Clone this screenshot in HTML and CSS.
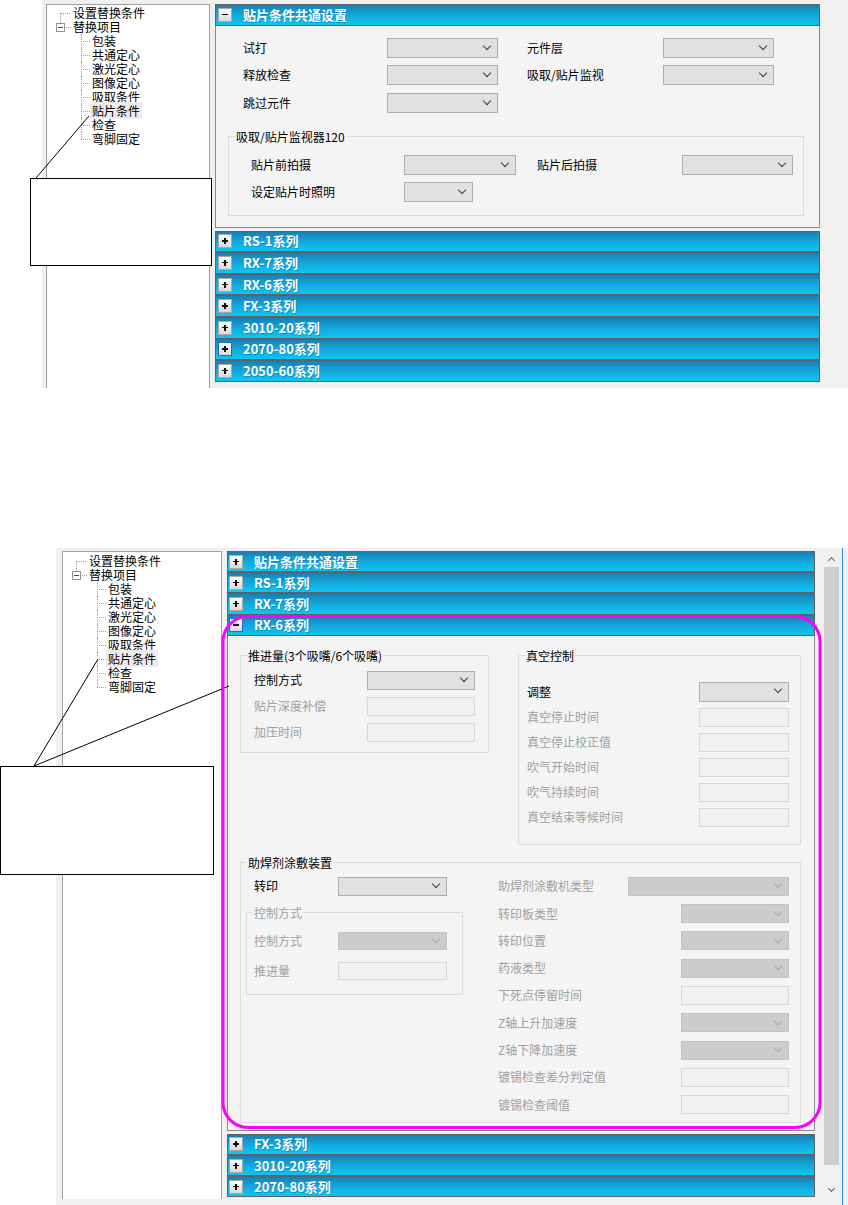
FILE: index.html
```html
<!DOCTYPE html>
<html lang="zh-CN">
<head>
    <meta charset="UTF-8">
    <title>替换条件设置</title>
    <link rel="stylesheet" href="styles.css">
</head>
<body>
<div class="page">

    <!-- first capture: common placement settings open -->
    <div class="shot shot-top">
        <ul class="tree">
            <li class="node root first">设置替换条件</li>
            <li class="node root branch"><span class="toggle"></span>替换项目</li>
            <li class="node child">包装</li>
            <li class="node child">共通定心</li>
            <li class="node child">激光定心</li>
            <li class="node child">图像定心</li>
            <li class="node child">吸取条件</li>
            <li class="node child"><span class="sel">贴片条件</span></li>
            <li class="node child">检查</li>
            <li class="node child last">弯脚固定</li>
        </ul>

        <div class="accordion">
            <div class="bar"><span class="pm"></span><span class="bar-title">贴片条件共通设置</span></div>
            <div class="pane pane-common">
                <div class="grid-common">
                    <span class="lbl">试打</span><span class="combo"></span>
                    <span class="lbl lbl-r">元件层</span><span class="combo"></span>
                    <span class="lbl">释放检查</span><span class="combo"></span>
                    <span class="lbl lbl-r">吸取/贴片监视</span><span class="combo"></span>
                    <span class="lbl">跳过元件</span><span class="combo"></span>
                </div>
                <fieldset class="group group-monitor">
                    <legend>吸取/贴片监视器120</legend>
                    <div class="grid-monitor">
                        <span class="lbl">贴片前拍摄</span><span class="combo"></span>
                        <span class="lbl lbl-m">贴片后拍摄</span><span class="combo"></span>
                        <span class="lbl">设定贴片时照明</span><span class="combo combo-short"></span>
                    </div>
                </fieldset>
            </div>
            <div class="bar"><span class="pm plus"></span><span class="bar-title">RS-1系列</span></div>
            <div class="bar"><span class="pm plus"></span><span class="bar-title">RX-7系列</span></div>
            <div class="bar"><span class="pm plus"></span><span class="bar-title">RX-6系列</span></div>
            <div class="bar"><span class="pm plus"></span><span class="bar-title">FX-3系列</span></div>
            <div class="bar"><span class="pm plus"></span><span class="bar-title">3010-20系列</span></div>
            <div class="bar"><span class="pm plus focus"></span><span class="bar-title">2070-80系列</span></div>
            <div class="bar"><span class="pm plus"></span><span class="bar-title">2050-60系列</span></div>
        </div>
    </div>

    <!-- second capture: RX-6 series open -->
    <div class="shot shot-bottom">
        <ul class="tree">
            <li class="node root first">设置替换条件</li>
            <li class="node root branch"><span class="toggle"></span>替换项目</li>
            <li class="node child">包装</li>
            <li class="node child">共通定心</li>
            <li class="node child">激光定心</li>
            <li class="node child">图像定心</li>
            <li class="node child">吸取条件</li>
            <li class="node child"><span class="sel">贴片条件</span></li>
            <li class="node child">检查</li>
            <li class="node child last">弯脚固定</li>
        </ul>

        <div class="accordion">
            <div class="bar"><span class="pm plus"></span><span class="bar-title">贴片条件共通设置</span></div>
            <div class="bar"><span class="pm plus"></span><span class="bar-title">RS-1系列</span></div>
            <div class="bar"><span class="pm plus"></span><span class="bar-title">RX-7系列</span></div>
            <div class="bar"><span class="pm focus"></span><span class="bar-title">RX-6系列</span></div>
            <div class="pane pane-rx6">
                <div class="rx6-top">
                    <fieldset class="group group-feed">
                        <legend>推进量(3个吸嘴/6个吸嘴)</legend>
                        <div class="grid-feed">
                            <span class="lbl">控制方式</span><span class="combo"></span>
                            <span class="lbl off">贴片深度补偿</span><span class="field"></span>
                            <span class="lbl off">加压时间</span><span class="field"></span>
                        </div>
                    </fieldset>
                    <fieldset class="group group-vac">
                        <legend>真空控制</legend>
                        <div class="grid-vac">
                            <span class="lbl">调整</span><span class="combo"></span>
                            <span class="lbl off">真空停止时间</span><span class="field"></span>
                            <span class="lbl off">真空停止校正值</span><span class="field"></span>
                            <span class="lbl off">吹气开始时间</span><span class="field"></span>
                            <span class="lbl off">吹气持续时间</span><span class="field"></span>
                            <span class="lbl off">真空结束等候时间</span><span class="field"></span>
                        </div>
                    </fieldset>
                </div>

                <fieldset class="group group-flux">
                    <legend>助焊剂涂敷装置</legend>
                    <div class="flux-cols">
                        <div class="flux-left">
                            <div class="flux-row">
                                <span class="lbl">转印</span><span class="combo"></span>
                            </div>
                            <fieldset class="group group-ctrl">
                                <legend class="off">控制方式</legend>
                                <div class="grid-ctrl">
                                    <span class="lbl off">控制方式</span><span class="combo off"></span>
                                    <span class="lbl off">推进量</span><span class="field"></span>
                                </div>
                            </fieldset>
                        </div>
                        <div class="flux-right">
                            <div class="frow"><span class="lbl off">助焊剂涂敷机类型</span><span class="combo off w-wide"></span></div>
                            <div class="frow"><span class="lbl off">转印板类型</span><span class="combo off w-std"></span></div>
                            <div class="frow"><span class="lbl off">转印位置</span><span class="combo off w-std"></span></div>
                            <div class="frow"><span class="lbl off">药液类型</span><span class="combo off w-std"></span></div>
                            <div class="frow"><span class="lbl off">下死点停留时间</span><span class="field w-std"></span></div>
                            <div class="frow"><span class="lbl off">Z轴上升加速度</span><span class="combo off w-std"></span></div>
                            <div class="frow"><span class="lbl off">Z轴下降加速度</span><span class="combo off w-std"></span></div>
                            <div class="frow"><span class="lbl off">镀锡检查差分判定值</span><span class="field w-std"></span></div>
                            <div class="frow"><span class="lbl off">镀锡检查阈值</span><span class="field w-std"></span></div>
                        </div>
                    </div>
                </fieldset>
            </div>
            <div class="bar"><span class="pm plus"></span><span class="bar-title">FX-3系列</span></div>
            <div class="bar"><span class="pm plus"></span><span class="bar-title">3010-20系列</span></div>
            <div class="bar"><span class="pm plus"></span><span class="bar-title">2070-80系列</span></div>
        </div>

        <div class="scrollbar">
            <span class="sb-arrow up"></span>
            <span class="sb-thumb"></span>
            <span class="sb-arrow down"></span>
        </div>
        <div class="focus-edge"></div>
    </div>

    <!-- callouts drawn over both captures -->
    <svg class="marks" width="848" height="1205" viewBox="0 0 848 1205">
        <line x1="36" y1="178" x2="89" y2="116"/>
        <rect x="30.5" y="178.5" width="181" height="87"/>
        <line x1="34" y1="766" x2="98" y2="659"/>
        <line x1="34" y1="766" x2="229" y2="686"/>
        <rect x="0.5" y="766.5" width="213" height="108"/>
        <rect class="ring" x="223" y="616.5" width="597" height="511" rx="25" ry="25"/>
    </svg>
</div>
</body>
</html>
```

FILE: styles.css
```css
body {
    margin: 0;
    background-color: #ffffff;
    font-family: "Noto Sans CJK SC", "Noto Sans", sans-serif;
    font-size: 12px;
    line-height: 16px;
    color: #000;
}

.page {
    position: relative;
    width: 848px;
    height: 1205px;
    overflow: hidden;
}

/* window captures */
.shot {
    display: flex;
    align-items: flex-start;
    box-sizing: border-box;
    background-color: #f0f0f0;
    overflow: hidden;
}

.shot-top {
    margin-left: 42px;
    width: 806px;
    height: 388px;
    padding: 4px 0 0 4px;
}

.shot-bottom {
    margin: 160px 0 0 56px;
    width: 792px;
    height: 657px;
    padding: 3px 0 0 6px;
}

/* tree view */
.tree {
    flex: none;
    list-style: none;
    margin: 0 5px 0 0;
    box-sizing: border-box;
    background-color: #ffffff;
    border: 1px solid #a0a0a0;
    border-bottom: 0;
}

.shot-top .tree {
    width: 164px;
    height: 384px;
    padding: 1px 0 0 0;
}

.shot-bottom .tree {
    width: 160px;
    height: 648px;
    padding: 2px 0 0 0;
}

.node {
    position: relative;
    height: 14px;
    line-height: 14px;
    white-space: nowrap;
}

.node::before, .node::after {
    content: "";
    position: absolute;
}

.root {
    padding-left: 26px;
}

.child {
    padding-left: 45px;
}

.first::before {
    left: 13px;
    top: 7px;
    width: 10px;
    border-top: 1px dotted #a0a0a0;
}

.first::after {
    left: 13px;
    top: 7px;
    height: 10px;
    border-left: 1px dotted #a0a0a0;
}

.branch::before {
    left: 19px;
    top: 7px;
    width: 5px;
    border-top: 1px dotted #a0a0a0;
}

.child::before {
    left: 34px;
    top: 7px;
    width: 9px;
    border-top: 1px dotted #a0a0a0;
}

.child::after {
    left: 34px;
    top: 0;
    height: 14px;
    border-left: 1px dotted #a0a0a0;
}

.child.last::after {
    height: 7px;
}

.toggle {
    position: absolute;
    left: 9px;
    top: 3px;
    width: 9px;
    height: 9px;
    box-sizing: border-box;
    border: 1px solid #919191;
    background-color: #fff;
}

.toggle::after {
    content: "";
    position: absolute;
    left: 1px;
    top: 3px;
    width: 5px;
    height: 1px;
    background-color: #2f4f80;
}

.sel {
    background-color: #ececec;
    padding: 0 2px;
    margin-left: -2px;
}

/* accordion */
.accordion {
    flex: none;
    display: flex;
    flex-direction: column;
}

.shot-top .accordion {
    width: 605px;
}

.shot-bottom .accordion {
    width: 588px;
}

.bar {
    flex: none;
    display: flex;
    align-items: center;
    box-sizing: border-box;
    height: 21.6px;
    padding-left: 2px;
    border: 1px solid #5c6266;
    background: linear-gradient(#1780b5, #13a8db 50%, #0fc6f1);
    color: #fff;
    font-weight: 700;
    font-size: 13px;
}

.shot-bottom .bar {
    height: 21.2px;
    padding-left: 1px;
}

.bar-title {
    text-shadow: 1px 1px 0 rgba(0, 70, 110, 0.35);
}

.pm {
    position: relative;
    flex: none;
    width: 14px;
    height: 14px;
    box-sizing: border-box;
    margin-right: 11px;
    border: 1px solid #a8a8a8;
    background: linear-gradient(#ffffff, #d8d8d8);
}

.pm.focus {
    border-color: #1c6fd2;
}

.pm::before {
    content: "";
    position: absolute;
    left: 3px;
    top: 5px;
    width: 6px;
    height: 1.5px;
    background-color: #111;
}

.pm.plus::after {
    content: "";
    position: absolute;
    left: 5.25px;
    top: 3px;
    width: 1.5px;
    height: 6px;
    background-color: #111;
}

.pane {
    flex: none;
    box-sizing: border-box;
    background-color: #f4f4f4;
    border: 1px solid #8a8a8a;
    border-top: 0;
}

/* controls */
.lbl {
    white-space: nowrap;
}

.off {
    color: #a0a0a0;
}

.combo {
    position: relative;
    display: block;
    box-sizing: border-box;
    height: 20px;
    border: 1px solid #adadad;
    background-color: #e1e1e1;
}

.combo::after {
    content: "";
    position: absolute;
    right: 7px;
    top: 4px;
    width: 5px;
    height: 5px;
    border-right: 1px solid #3c3c3c;
    border-bottom: 1px solid #3c3c3c;
    transform: rotate(45deg);
}

.combo.off {
    background-color: #cccccc;
    border-color: #c2c2c2;
}

.combo.off::after {
    border-color: #a9a9a9;
}

.field {
    display: block;
    box-sizing: border-box;
    height: 19px;
    border: 1px solid #d7d7d7;
    background-color: #f0f0f0;
}

/* group boxes */
.group {
    box-sizing: border-box;
    min-width: 0;
    margin: 0;
    border: 1px solid #dcdcdc;
}

.group legend {
    margin-left: 6px;
    padding: 0 1px;
    line-height: 16px;
}

/* common settings pane */
.pane-common {
    height: 202px;
    margin-bottom: 3px;
    padding: 12px 15px 0 12px;
}

.grid-common {
    margin-left: 15px;
    display: grid;
    grid-template-columns: 144px 111px 165px 111px;
    grid-auto-rows: 20px;
    row-gap: 7.5px;
    align-items: center;
}

.lbl-r {
    padding-left: 29px;
}

.group-monitor {
    margin-top: 16px;
    padding: 10px 0 13px 0;
}

.grid-monitor {
    margin-left: 22px;
    display: grid;
    grid-template-columns: 153px 112px 166px 111px;
    grid-auto-rows: 20px;
    row-gap: 7px;
    align-items: center;
}

.lbl-m {
    padding-left: 21px;
}

.combo-short {
    width: 69px;
}

/* RX-6 pane */
.pane-rx6 {
    height: 495px;
    margin-bottom: 3px;
    padding: 12px 13px 0 12px;
}

.pane-rx6 .combo {
    height: 19px;
}

.pane-rx6 .combo::after {
    top: 3.5px;
}

.rx6-top {
    display: flex;
    align-items: flex-start;
    gap: 29px;
}

.group-feed {
    width: 249px;
    padding: 7px 0 10px 0;
}

.grid-feed {
    margin-left: 13px;
    display: grid;
    grid-template-columns: 113px 108px;
    grid-auto-rows: 19px;
    row-gap: 7px;
    align-items: center;
}

.group-vac {
    width: 283px;
    padding: 18px 0 17px 0;
}

.grid-vac {
    margin: 0 11px 0 8px;
    display: grid;
    grid-template-columns: 1fr 90px;
    grid-template-rows: 20px repeat(5, 19px);
    row-gap: 6px;
    align-items: center;
}

.grid-vac .combo {
    height: 20px;
}

.group-flux {
    margin-top: 10px;
    padding: 6px 0 8px 0;
}

.flux-cols {
    display: flex;
    margin: 0 11px 0 5px;
}

.flux-left {
    flex: none;
    width: 217px;
    margin-right: 35px;
}

.flux-row {
    display: grid;
    grid-template-columns: 92px 109px;
    height: 19px;
    align-items: center;
}

.flux-row .lbl {
    padding-left: 8px;
}

.group-ctrl {
    width: 217px;
    margin-top: 9px;
    padding: 11px 0 14px 0;
}

.grid-ctrl {
    margin-left: 7px;
    display: grid;
    grid-template-columns: 84px 109px;
    grid-auto-rows: 18px;
    row-gap: 12px;
    align-items: center;
}

.grid-ctrl .combo, .grid-ctrl .field {
    height: 18px;
}

.flux-right {
    flex: 1;
    display: flex;
    flex-direction: column;
    gap: 8.3px;
}

.frow {
    display: flex;
    justify-content: space-between;
    align-items: center;
    height: 19px;
}

.w-wide {
    width: 161px;
}

.w-std {
    width: 108px;
}

/* scrollbar of the second capture */
.scrollbar {
    flex: none;
    display: flex;
    flex-direction: column;
    align-items: center;
    width: 19px;
    height: 648px;
    margin-left: 7px;
    background-color: #f0f0f0;
}

.sb-arrow {
    position: relative;
    flex: none;
    width: 19px;
    height: 16px;
}

.sb-arrow::after {
    content: "";
    position: absolute;
    left: 7px;
    width: 4px;
    height: 4px;
    border-left: 1.5px solid #606060;
    border-top: 1.5px solid #606060;
}

.sb-arrow.up::after {
    top: 7px;
    transform: rotate(45deg);
}

.sb-arrow.down {
    margin-top: auto;
}

.sb-arrow.down::after {
    top: 3px;
    transform: rotate(225deg);
}

.sb-thumb {
    flex: none;
    width: 15px;
    height: 598px;
    background-color: #cdcdcd;
}

.focus-edge {
    flex: none;
    width: 0;
    height: 657px;
    margin: -3px 0 0 1px;
    border-left: 1px solid #2b8be0;
}

/* callouts */
.marks {
    position: absolute;
    top: 0;
    left: 0;
    pointer-events: none;
}

.marks line {
    stroke: #000;
    stroke-width: 1;
}

.marks rect {
    fill: #ffffff;
    stroke: #000;
    stroke-width: 1;
}

.marks rect.ring {
    fill: none;
    stroke: #ff00ff;
    stroke-width: 3;
}
```
